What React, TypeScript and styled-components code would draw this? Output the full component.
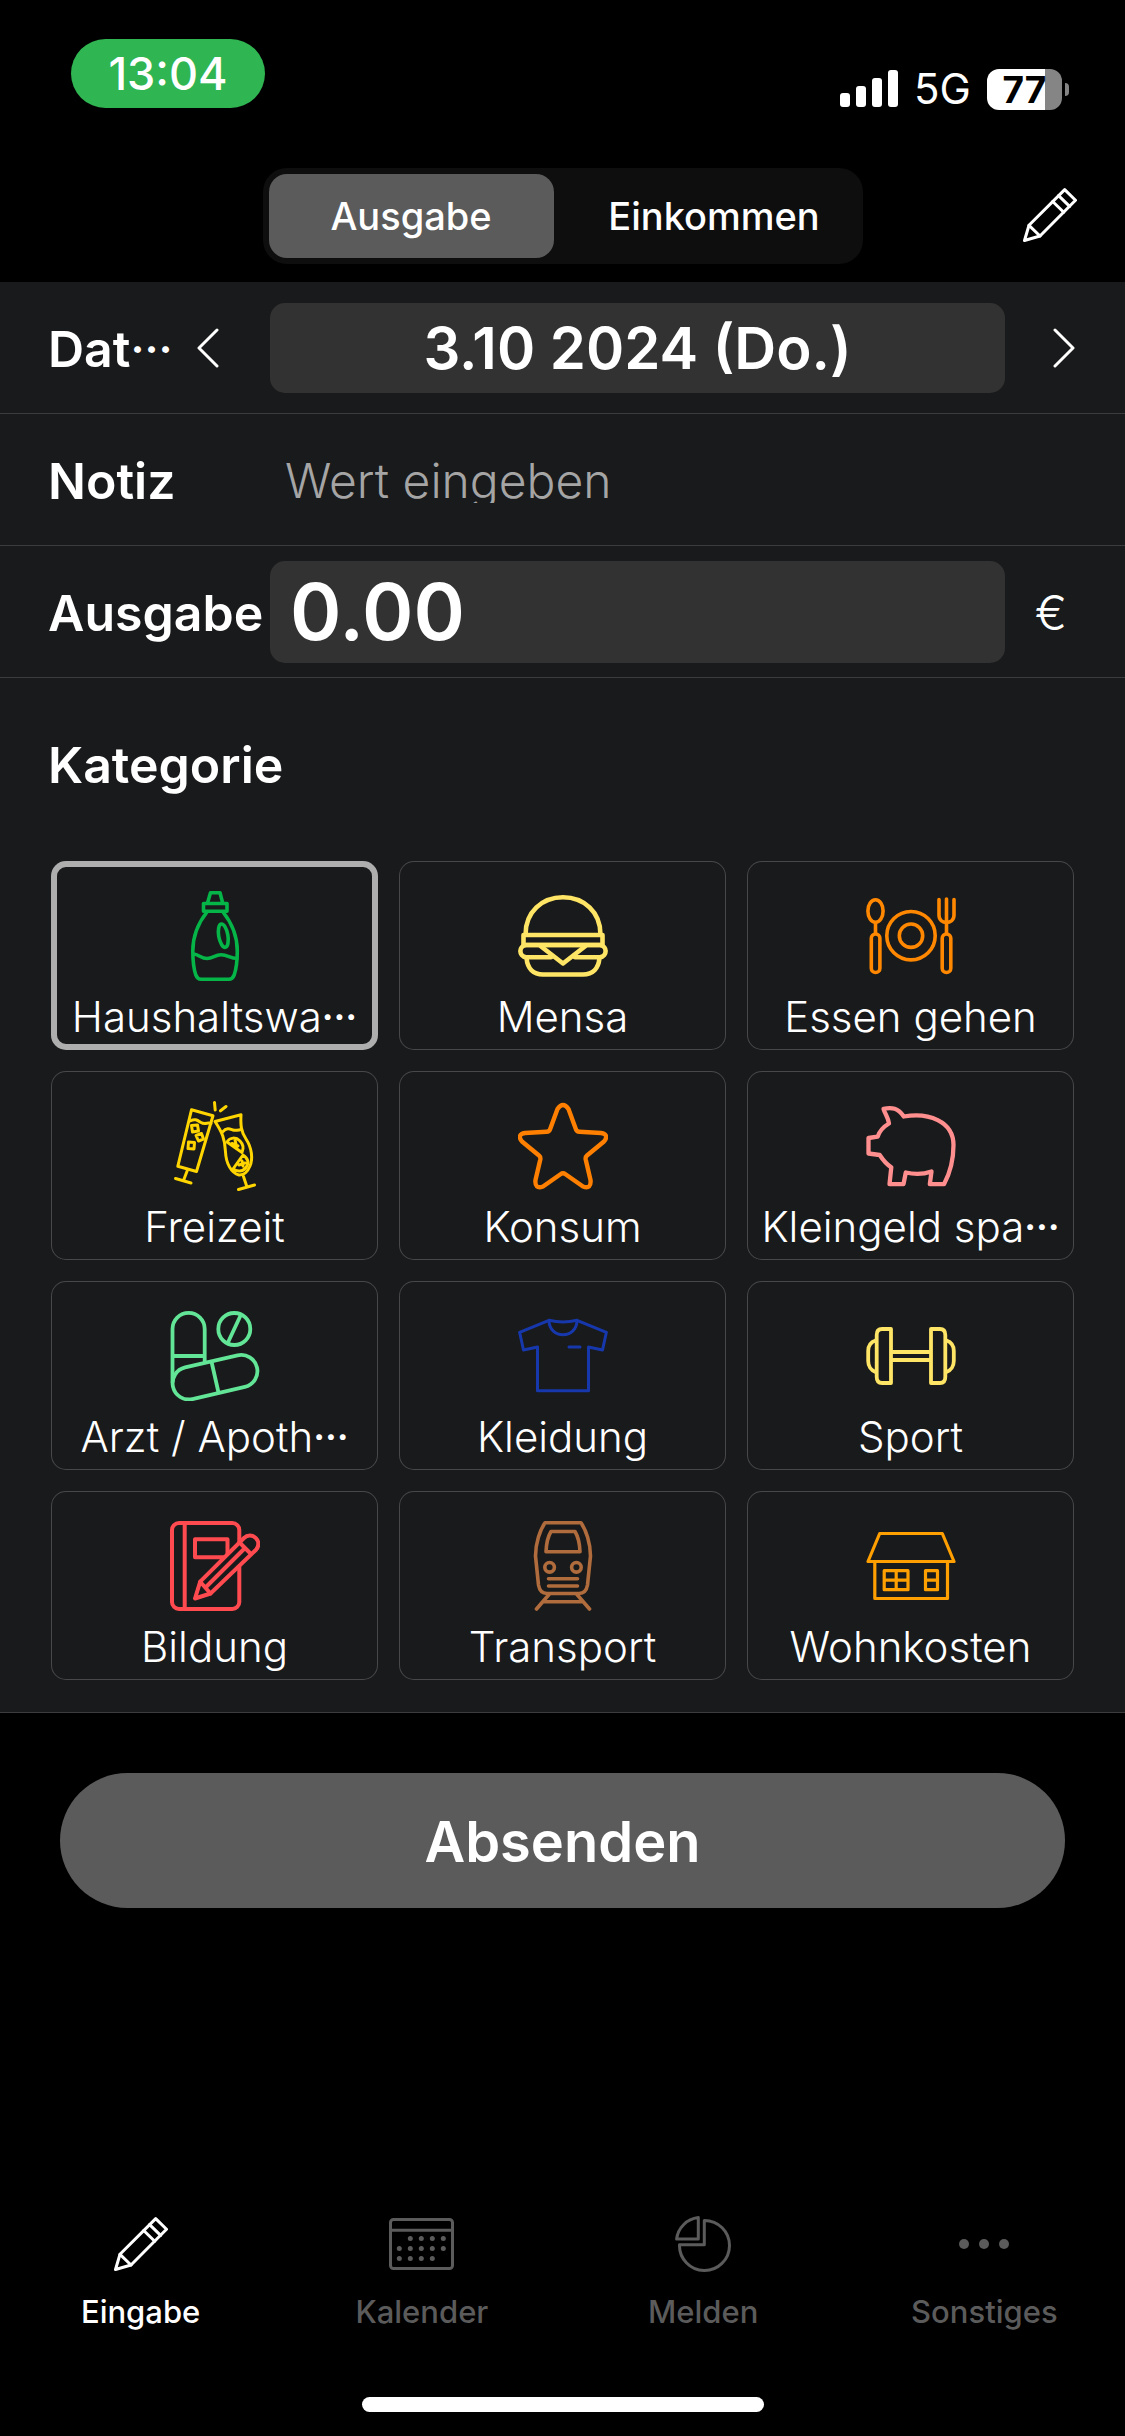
import React, { useState } from "react";
import styled, { createGlobalStyle, css } from "styled-components";

const colors = {
  page: "#000000",
  panel: "#191a1b",
  field: "#323232",
  active: "#5b5b5b",
  line: "#3c3c3f",
  cardLine: "#48484b",
  selected: "#aeaeae",
  muted: "#5b5b5b",
  placeholder: "#a5a5a5",
  pill: "#2fb551",
};

const GlobalStyle = createGlobalStyle`
  *, *::before, *::after { box-sizing: border-box; }
  body {
    margin: 0;
    background: ${colors.page};
    color: #fff;
    font-family: Inter, "Noto Sans CJK JP", sans-serif;
  }
  button, input { font: inherit; color: inherit; }
  button { padding: 0; border: 0; background: none; cursor: pointer; }
`;

const Page = styled.div`
  min-height: 100vh;
  display: flex;
  flex-direction: column;
`;

/* ---------- status bar ---------- */

const StatusBar = styled.div`
  display: flex;
  justify-content: space-between;
  align-items: flex-start;
  padding: 39px 56px 0 71px;
`;

const TimePill = styled.time`
  width: 194px;
  height: 69px;
  border-radius: 35px;
  background: ${colors.pill};
  font-size: 45px;
  font-weight: 500;
  line-height: 69px;
  text-align: center;
`;

const StatusRight = styled.div`
  display: flex;
  align-items: center;
  margin-top: 28px;
  height: 44px;
`;

const Signal = styled.svg`
  width: 58px;
  height: 38px;
  margin-right: 16px;
`;

const Network = styled.span`
  font-size: 42px;
  line-height: 46px;
  width: 73px;
`;

const Battery = styled.div`
  display: flex;
  align-items: center;
  gap: 3px;
`;

const BatteryBody = styled.div<{ $level: number }>`
  width: 75px;
  height: 41px;
  border-radius: 12px;
  background: linear-gradient(to right, #fff ${(p) => p.$level}%, #858585 ${(p) => p.$level}%);
  color: #000;
  font-size: 37px;
  font-weight: 700;
  line-height: 41px;
  text-align: center;
`;

const BatteryTip = styled.div`
  width: 4px;
  height: 13px;
  border-radius: 0 6px 6px 0;
  background: #858585;
`;

/* ---------- header ---------- */

const Header = styled.header`
  display: grid;
  grid-template-columns: 1fr 600px 1fr;
  align-items: center;
  padding: 57px 48px 18px;
`;

const Segmented = styled.div`
  grid-column: 2;
  display: grid;
  grid-template-columns: 1fr 1fr;
  gap: 18px;
  padding: 6px;
  height: 96px;
  border-radius: 24px;
  background: #0e0e0e;
`;

const Segment = styled.button<{ $active: boolean }>`
  border-radius: 18px;
  background: ${(p) => (p.$active ? colors.active : "transparent")};
  font-size: 38px;
  font-weight: 500;
`;

const EditButton = styled.button`
  justify-self: end;
  display: flex;
  padding-bottom: 2px;
`;

/* ---------- form ---------- */

const Panel = styled.main`
  background: ${colors.panel};
  border-bottom: 1px solid ${colors.line};
`;

const Row = styled.div`
  display: grid;
  grid-template-columns: 222px 1fr 120px;
  align-items: center;
  height: 132px;
  padding-left: 48px;
  border-bottom: 1px solid ${colors.line};
`;

const LabelCell = styled.div`
  display: flex;
  align-items: center;
  gap: 24px;
`;

const labelText = css`
  padding-top: 3px;
  font-size: 50px;
  font-weight: 600;
  line-height: 60px;
  white-space: nowrap;
`;

const Label = styled.label`
  ${labelText}
`;

/* Ellipsis raised to the middle of the letters. */
const Dots = styled.span`
  font-size: 88%;
  font-weight: 600;
  line-height: 0;
  vertical-align: 0.32em;
`;

const fieldBox = css`
  width: 100%;
  border: 0;
  border-radius: 15px;
  background: ${colors.field};
  font-weight: 600;
`;

const DateButton = styled.button`
  ${fieldBox}
  height: 90px;
  font-size: 58px;
`;

const NoteInput = styled.input`
  width: 100%;
  height: 46px;
  padding: 2px 15px 0;
  border: 0;
  outline: 0;
  background: transparent;
  font-size: 48px;
  font-weight: 300;
  line-height: 44px;
  &::placeholder {
    color: ${colors.placeholder};
    opacity: 1;
  }
`;

const AmountInput = styled.input`
  ${fieldBox}
  height: 102px;
  padding: 0 20px;
  outline: 0;
  font-size: 78px;
`;

const SideCell = styled.div`
  display: flex;
  justify-content: flex-end;
  padding-right: 50px;
`;

const Currency = styled.span`
  padding: 3px 8px 0 0;
  font-size: 48px;
  font-weight: 300;
  line-height: 60px;
`;

const ArrowButton = styled.button`
  display: flex;
`;

const Category = styled.section`
  padding: 54px 51px 32px;
`;

const CategoryTitle = styled.h2`
  ${labelText}
  margin: 0 0 66px -3px;
`;

const Grid = styled.div`
  display: grid;
  grid-template-columns: repeat(3, minmax(0, 1fr));
  gap: 21px;
`;

const Card = styled.button<{ $selected: boolean }>`
  display: flex;
  flex-direction: column;
  align-items: center;
  height: 189px;
  padding-top: 30px;
  border-radius: 15px;
  box-shadow: inset 0 0 0 ${(p) => (p.$selected ? `6px ${colors.selected}` : `1px ${colors.cardLine}`)};
`;

const CardIcon = styled.svg<{ $color: string; $stroke: number }>`
  width: 90px;
  height: 90px;
  fill: none;
  stroke: ${(p) => p.$color};
  stroke-width: ${(p) => p.$stroke};
  stroke-linejoin: round;
  stroke-linecap: round;
`;

const CardLabel = styled.span`
  margin-top: 11px;
  font-size: 42px;
  font-weight: 300;
  line-height: 50px;
  white-space: nowrap;
`;

/* ---------- submit + tabs ---------- */

const Submit = styled.button`
  margin: 60px 60px 0;
  padding-top: 3px;
  height: 135px;
  border-radius: 68px;
  background: ${colors.active};
  font-size: 56px;
  font-weight: 600;
`;

const Tabs = styled.nav`
  display: grid;
  grid-template-columns: repeat(4, 1fr);
  margin-top: auto;
`;

const Tab = styled.a<{ $active?: boolean }>`
  display: flex;
  flex-direction: column;
  align-items: center;
  gap: 22px;
  color: ${(p) => (p.$active ? "#fff" : colors.muted)};
  font-size: 31px;
  font-weight: 500;
  line-height: 36px;
  text-decoration: none;
`;

const TabIcon = styled.span`
  display: flex;
  align-items: center;
  height: 56px;
`;

const HomeBar = styled.div`
  align-self: center;
  width: 402px;
  height: 15px;
  margin: 67px 0 24px;
  border-radius: 8px;
  background: #fff;
`;

const LineSvg = styled.svg`
  fill: none;
  stroke: currentColor;
  stroke-width: 3;
  stroke-linejoin: round;
  stroke-linecap: round;
`;

/* ---------- icons ---------- */

const PencilIcon = () => (
  <LineSvg width="54" height="54" viewBox="0 0 54 54" aria-hidden="true">
    <path d="M1.5 52.5 6 37.3 41.7 1.6 52.5 12.2 17 48Z" />
    <path d="M6 37.3 17 48M29.7 13.5 40.7 24.3M35.6 7.6 46.6 18.4" />
  </LineSvg>
);

const ChevronIcon = ({ flip = false }: { flip?: boolean }) => (
  <LineSvg width="22" height="40" viewBox="0 0 22 40" aria-hidden="true">
    <path d={flip ? "M2 2 20 20 2 38" : "M20 2 2 20 20 38"} />
  </LineSvg>
);

const CalendarIcon = () => (
  <LineSvg width="65" height="52" viewBox="0 0 65 52" aria-hidden="true">
    <rect x="1.5" y="1.5" width="62" height="49" rx="3" />
    <path d="M2 12.3H63" />
    <g fill="currentColor" stroke="none">
      {[20.6, 30.6, 40.6].map((y, row) =>
        [10.3, 21.3, 32.3, 43.3, 54.3].map((x, col) =>
          (row === 0 && col === 0) || (row === 2 && col === 4) ? null : (
            <circle key={`${x}-${y}`} cx={x} cy={y} r="2.5" />
          ),
        ),
      )}
    </g>
  </LineSvg>
);

const PieIcon = () => (
  <LineSvg width="56" height="56" viewBox="0 0 56 56" aria-hidden="true">
    <path d="M29.3 4.5V28.7H4.5A25 25 0 1 0 29.3 4.5Z" />
    <path d="M23.3 1.6V23H1.6C3 12 11.5 3 23.3 1.6Z" />
  </LineSvg>
);

const MoreIcon = () => (
  <svg width="52" height="12" viewBox="0 0 52 12" fill="currentColor" aria-hidden="true">
    <circle cx="6" cy="6" r="5" />
    <circle cx="26" cy="6" r="5" />
    <circle cx="46" cy="6" r="5" />
  </svg>
);

type CategoryItem = {
  name: string;
  cut?: boolean;
  color: string;
  stroke: number;
  art: React.ReactNode;
};

const categories: CategoryItem[] = [
  {
    name: "Haushaltswa",
    cut: true,
    color: "#05b548",
    stroke: 3.6,
    art: (
      <>
        <path d="M37.5 12 40.5 1.8H50L52.7 12M33.5 12.5H57V20.3H33.5Z" />
        <path d="M37 21C29 31 22.8 45 22.8 60 22.8 71 23.8 78 25.8 84Q27.5 88.2 31 88.2H59Q62.5 88.2 64.2 84C66.2 78 67.3 71 67.3 60 67.3 45 61 31 53 21" />
        <path d="M23.5 63C29 63.5 31 67.5 37 67.5S45 63.7 51 63.7C58 63.7 60 67.5 67 67.5" />
        <ellipse cx="53.3" cy="44.7" rx="4.6" ry="11.8" transform="rotate(-10 53.3 44.7)" />
      </>
    ),
  },
  {
    name: "Mensa",
    color: "#ffe566",
    stroke: 4.6,
    art: (
      <>
        <path d="M7.6 43C7.6 21 24 6.2 45 6.2S82.4 21 82.4 43" />
        <path d="M5.5 44H84.5V54H5.5Z" />
        <path d="M33 66.3H8C.5 65 .5 55 8 54H82C89.5 55 89.5 65 82 66.3H57" />
        <path d="M22.5 55 45 72.5 67.5 55" />
        <path d="M8.6 67.5C9.5 77 15 83.5 25 83.5H65C75 83.5 80.5 77 81.4 67.5" />
      </>
    ),
  },
  {
    name: "Essen gehen",
    color: "#ff8800",
    stroke: 3.6,
    art: (
      <>
        <ellipse cx="9.5" cy="20" rx="7.6" ry="11.3" />
        <path d="M9.5 32V42M80.5 8V42M73 8.5V24C73 34 88 34 88 24V8.5" />
        <rect x="5.3" y="43" width="8.6" height="38.5" rx="4.3" />
        <rect x="76.2" y="43" width="8.6" height="38.5" rx="4.3" />
        <circle cx="45" cy="44.7" r="24.2" />
        <circle cx="45" cy="44.7" r="11.7" />
      </>
    ),
  },
  {
    name: "Freizeit",
    color: "#ffd500",
    stroke: 3,
    art: (
      <>
        <path d="M21.5 8.8 43 14.7 26.5 70.5 7.8 65.3Z" />
        <path d="M20 20C25 17.5 27 19 31 21.5S38 21 41 22.5" />
        <path d="M17.5 69 13.5 79.5M5.5 77.5 21 82" />
        <path d="m21.5 24.5 6-.5 1 6-6 1ZM26 34.5l5.5-2 2 5.5-5 2ZM18.5 41l6 .5-.5 6.5-6-.5Z" />
        <path d="M45 20.5 71 13.7C70.5 24 71 31 76 38 82 47 83 58 80 65Q76 74.5 69 74C61 72 56 62 55.5 51 55 38 52 31 45 20.5Z" />
        <path d="M52.5 31C57 26 60 28 63 29S68 29 71 28.5" />
        <path d="M57 41C60 36 66 36 70 40 74 44 73.5 48 72 51.5ZM62 42.5 68 45M65 39 66 43" />
        <path d="M73 54C78 57 79.5 62 76 66.5 72.5 71 67 71 63 68ZM72 60 73 65M69 64 75 62" />
        <path d="M73.5 75.5 76.8 85.5M68.5 88.5 84.5 84M44.5 1.5 45.2 9M56 5.5 50.5 9.8" />
      </>
    ),
  },
  {
    name: "Konsum",
    color: "#ff8000",
    stroke: 4.4,
    art: (
      <path d="M39.5 8Q45 0 50.5 8L58 28.5Q58.8 30.7 61.5 30.8L83 32Q91.5 33.5 86 40.5L69 54.5Q67.2 56 67.7 58.5L72.5 79Q73.5 88.5 65 85.5L47.5 73.2Q45 71.5 42.5 73.2L25 85.5Q16.5 88.5 17.5 79L22.3 58.5Q22.8 56 21 54.5L4 40.5Q-1.5 33.5 7 32L28.5 30.8Q31.2 30.7 32 28.5Z" />
    ),
  },
  {
    name: "Kleingeld spa",
    cut: true,
    color: "#ff8f8f",
    stroke: 4.3,
    art: (
      <path d="M2.5 37 11.7 35.7C13.5 30 17 26 23 22.5 22.5 17 19 13 17.5 7.8 26 6 32 7 37.8 15.5 62 11 87.5 20 87.5 44 87.5 58 84 72 78 83.2H63.8L65.5 70.5C57 73.5 48 73.5 39.8 71.5L37.5 83.2H23.5L25.3 66.3C20 63 17 59 13.7 54L2.5 52.5Z" />
    ),
  },
  {
    name: "Arzt / Apoth",
    cut: true,
    color: "#62e596",
    stroke: 3.8,
    art: (
      <>
        <path d="M34.7 50V18A16.1 16.1 0 0 0 2.5 18V71M3 45H34" />
        <rect x="1.9" y="50" width="86.2" height="32.4" rx="16.2" transform="rotate(-13 45 66.2)" />
        <path d="M41.7 51.5 48.5 81.5" />
        <circle cx="64.3" cy="18" r="16" />
        <path d="M70.8 4 57.7 32" />
      </>
    ),
  },
  {
    name: "Kleidung",
    color: "#1738ac",
    stroke: 3,
    art: (
      <>
        <path d="M31 9.3 1.6 21.3 5.5 39 19.5 36V79.7H70.5V36L84.5 39 88.4 21.3 59 9.3Q45 12.5 31 9.3Z" />
        <path d="M31 9.3C31 28.5 59 28.5 59 9.3M51 36H62" />
      </>
    ),
  },
  {
    name: "Sport",
    color: "#ffe566",
    stroke: 3.8,
    art: (
      <>
        <path d="M25 18H16Q10.7 18 10.7 24V66Q10.7 72 16 72H25ZM65 18H74Q79.3 18 79.3 24V66Q79.3 72 74 72H65Z" />
        <path d="M9.5 29.5C5 31 2.2 35 2.2 40V50C2.2 55 5 59.5 9.5 61M80.5 29.5C85 31 87.8 35 87.8 40V50C87.8 55 85 59.5 80.5 61" />
        <path d="M26 41H64M26 49H64" />
      </>
    ),
  },
  {
    name: "Bildung",
    color: "#ff4a50",
    stroke: 4,
    art: (
      <>
        <rect x="2" y="2" width="67.3" height="86" rx="7" />
        <path d="M14.7 2V88M25 18.3H57.5V36.3H25Z" />
        <path fill={colors.panel} d="M25 77.5 30.2 60.7 74 17A8.3 8.3 0 0 1 85.8 29L40.5 72.5Z" />
        <path d="M30.2 60.7 40.5 72.5M69.5 21.5 81 33M37 65 73.5 28.5" />
      </>
    ),
  },
  {
    name: "Transport",
    color: "#b06c3c",
    stroke: 3.6,
    art: (
      <>
        <path d="M27 1.8H63C68 9 72.5 22 72.5 35L69.5 64Q68 72.5 61 72.5H29Q22 72.5 20.5 64L17.5 35C17.5 22 22 9 27 1.8Z" />
        <path d="M33 10.5H57Q61.5 18 62 30.7H28Q28.5 18 33 10.5Z" />
        <circle cx="31.6" cy="46.3" r="4.8" />
        <circle cx="58.4" cy="46.3" r="4.8" />
        <path d="M30.5 57.7H59.5M30.5 65H59.5M31 73.5 18.5 88M59 73.5 71.5 88M25 80.8H65" />
      </>
    ),
  },
  {
    name: "Wohnkosten",
    color: "#ff9f00",
    stroke: 3.2,
    art: (
      <>
        <path d="M13.7 12.5H76.3L88 40.5H2ZM8.8 41V77.5H81.5V41" />
        <path d="M18.2 49.7H42V68.7H18.2ZM30.2 49.7V68.7M18.2 59.2H42M59.5 49.7H71.5V68.7H59.5ZM59.5 59.2H71.5" />
      </>
    ),
  },
];

export default function App() {
  const [mode, setMode] = useState<"out" | "in">("out");
  const [selected, setSelected] = useState(0);
  const [note, setNote] = useState("");
  const [amount, setAmount] = useState("0.00");

  return (
    <Page>
      <GlobalStyle />
      <StatusBar>
        <TimePill>13:04</TimePill>
        <StatusRight>
          <Signal viewBox="0 0 58 38" fill="#fff" aria-hidden="true">
            <rect x="0" y="23" width="10" height="14" rx="3" />
            <rect x="16" y="16" width="10" height="21" rx="3" />
            <rect x="32" y="8" width="10" height="29" rx="3" />
            <rect x="48" y="0" width="10" height="37" rx="3" />
          </Signal>
          <Network>5G</Network>
          <Battery>
            <BatteryBody $level={77}>77</BatteryBody>
            <BatteryTip />
          </Battery>
        </StatusRight>
      </StatusBar>

      <Header>
        <Segmented>
          <Segment $active={mode === "out"} onClick={() => setMode("out")}>
            Ausgabe
          </Segment>
          <Segment $active={mode === "in"} onClick={() => setMode("in")}>
            Einkommen
          </Segment>
        </Segmented>
        <EditButton aria-label="Bearbeiten">
          <PencilIcon />
        </EditButton>
      </Header>

      <Panel>
        <Row>
          <LabelCell>
            <Label htmlFor="date">
              Dat<Dots>…</Dots>
            </Label>
            <ArrowButton aria-label="Vorheriger Tag">
              <ChevronIcon />
            </ArrowButton>
          </LabelCell>
          <DateButton id="date">3.10 2024 (Do.)</DateButton>
          <SideCell>
            <ArrowButton aria-label="Nächster Tag">
              <ChevronIcon flip />
            </ArrowButton>
          </SideCell>
        </Row>
        <Row>
          <Label htmlFor="note">Notiz</Label>
          <NoteInput
            id="note"
            placeholder="Wert eingeben"
            value={note}
            onChange={(e) => setNote(e.target.value)}
          />
        </Row>
        <Row>
          <Label htmlFor="amount">Ausgabe</Label>
          <AmountInput
            id="amount"
            inputMode="decimal"
            value={amount}
            onChange={(e) => setAmount(e.target.value)}
          />
          <SideCell>
            <Currency>€</Currency>
          </SideCell>
        </Row>

        <Category>
          <CategoryTitle>Kategorie</CategoryTitle>
          <Grid>
            {categories.map((item, index) => (
              <Card
                key={item.name}
                $selected={index === selected}
                aria-pressed={index === selected}
                onClick={() => setSelected(index)}
              >
                <CardIcon viewBox="0 0 90 90" $color={item.color} $stroke={item.stroke} aria-hidden="true">
                  {item.art}
                </CardIcon>
                <CardLabel>
                  {item.name}
                  {item.cut && <Dots>…</Dots>}
                </CardLabel>
              </Card>
            ))}
          </Grid>
        </Category>
      </Panel>

      <Submit>Absenden</Submit>

      <Tabs>
        <Tab href="#eingabe" $active aria-current="page">
          <TabIcon>
            <PencilIcon />
          </TabIcon>
          Eingabe
        </Tab>
        <Tab href="#kalender">
          <TabIcon>
            <CalendarIcon />
          </TabIcon>
          Kalender
        </Tab>
        <Tab href="#melden">
          <TabIcon>
            <PieIcon />
          </TabIcon>
          Melden
        </Tab>
        <Tab href="#sonstiges">
          <TabIcon>
            <MoreIcon />
          </TabIcon>
          Sonstiges
        </Tab>
      </Tabs>
      <HomeBar />
    </Page>
  );
}
